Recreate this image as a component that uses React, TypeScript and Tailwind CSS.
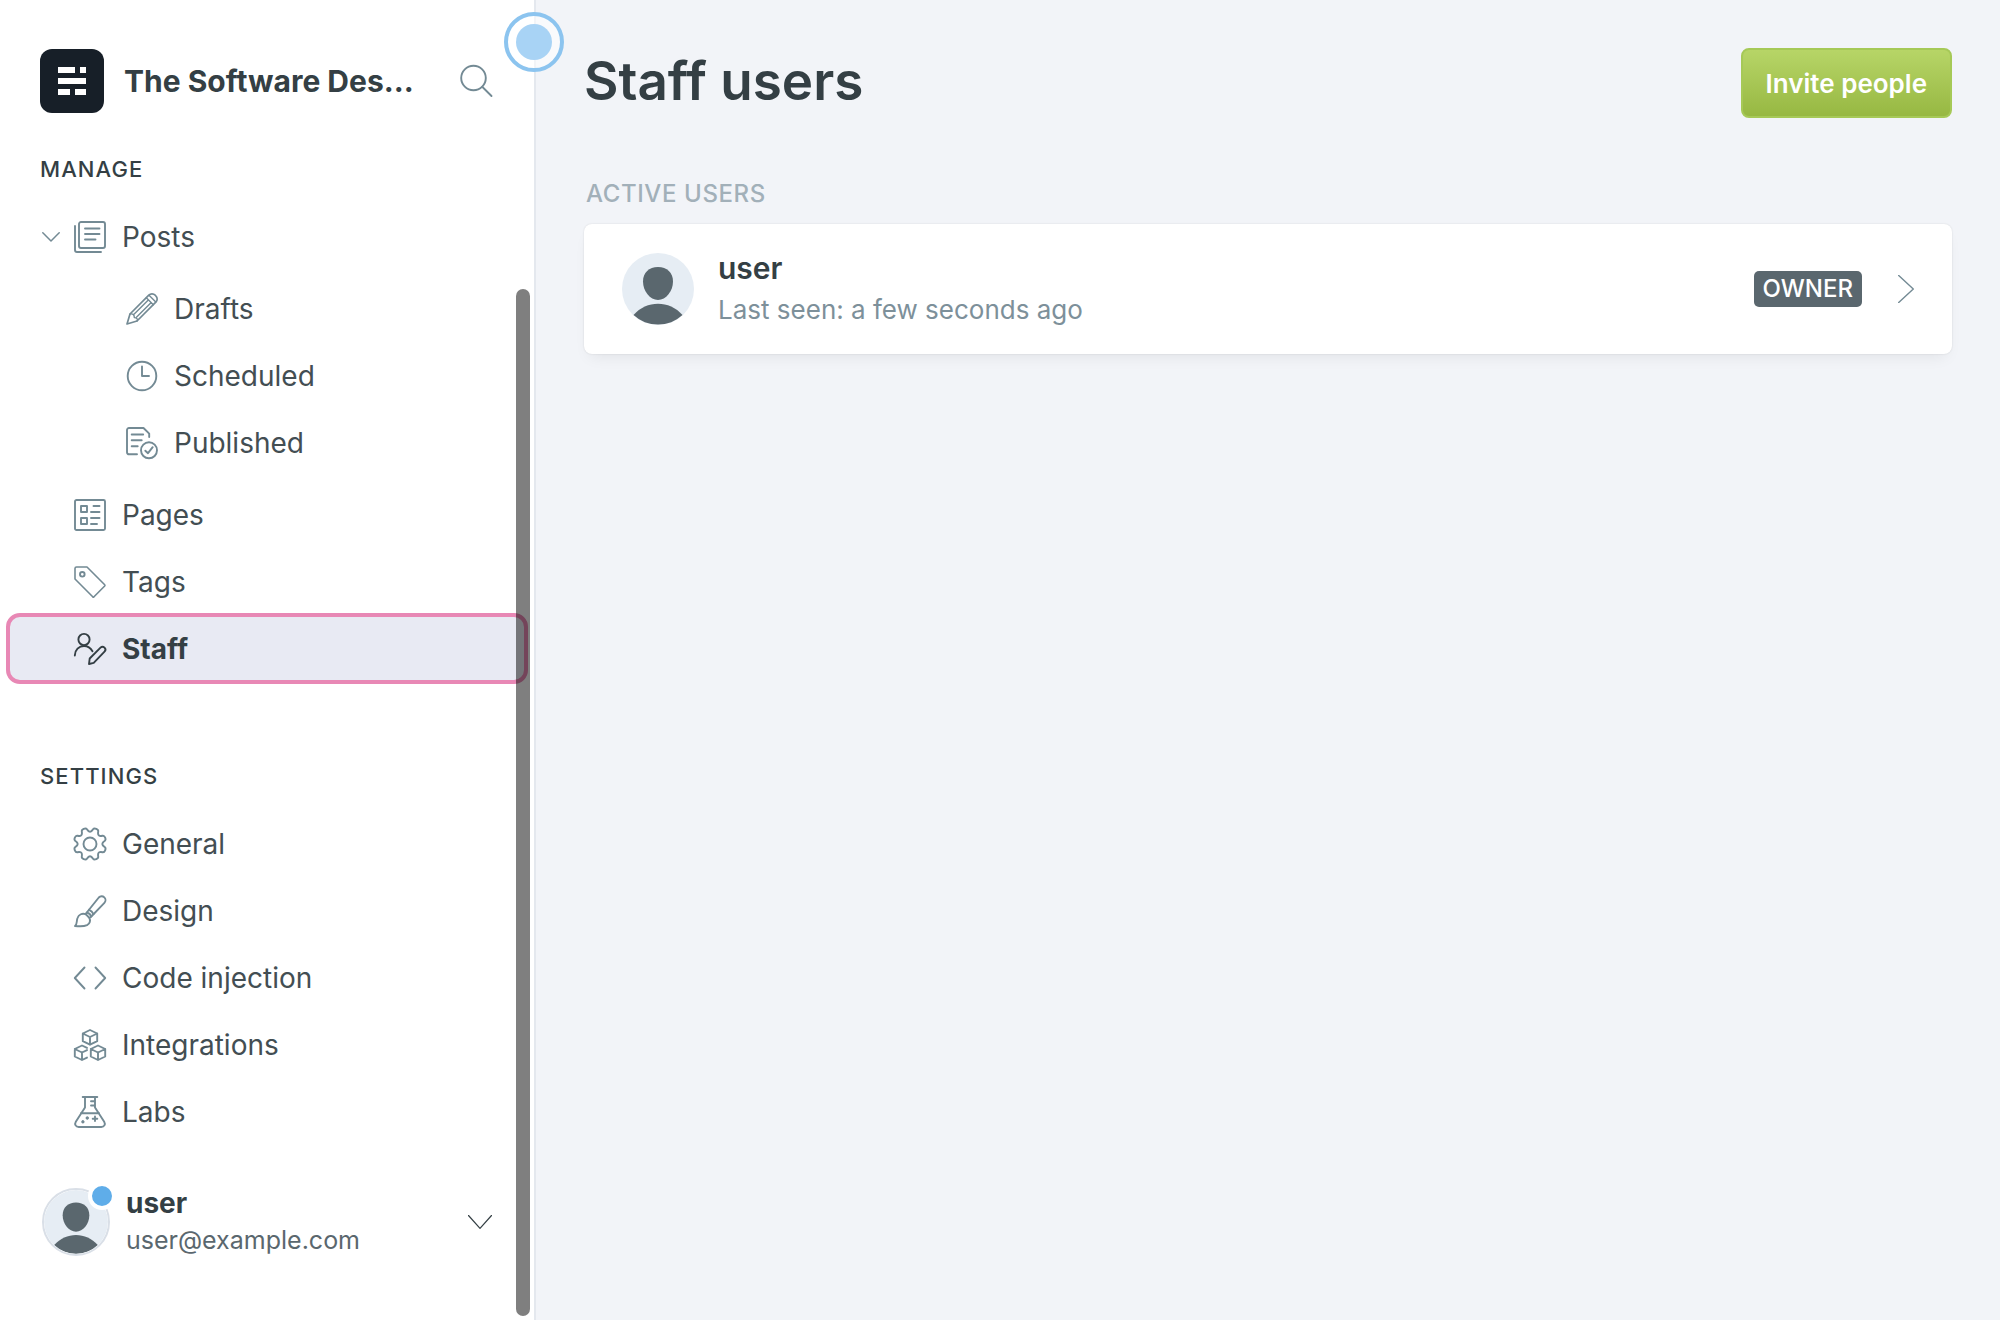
import type { ReactNode } from "react";

function Icon({ children }: { children: ReactNode }) {
  return (
    <svg
      viewBox="0 0 32 32"
      className="size-8 shrink-0 overflow-visible"
      fill="none"
      stroke="currentColor"
      strokeWidth="1.9"
      strokeLinecap="round"
      strokeLinejoin="round"
      aria-hidden="true"
    >
      {children}
    </svg>
  );
}

/* Eight-toothed gear outline, smoothed through the midpoints of its corners. */
function gearPath() {
  const pts: [number, number][] = [];
  for (let k = 0; k < 8; k++) {
    const base = k * 45;
    const ring: [number, number][] = [
      [0, 12],
      [9, 13.4],
      [14, 16.6],
      [31, 16.6],
      [36, 13.4],
    ];
    for (const [deg, r] of ring) {
      const a = ((base + deg) * Math.PI) / 180;
      pts.push([16 + r * Math.sin(a), 16 - r * Math.cos(a)]);
    }
  }
  const mid = (a: [number, number], b: [number, number]) =>
    `${((a[0] + b[0]) / 2).toFixed(2)} ${((a[1] + b[1]) / 2).toFixed(2)}`;
  let d = `M${mid(pts[pts.length - 1], pts[0])}`;
  pts.forEach((p, i) => {
    d += `Q${p[0].toFixed(2)} ${p[1].toFixed(2)} ${mid(p, pts[(i + 1) % pts.length])}`;
  });
  return d + "Z";
}

const icons = {
  posts: (
    <Icon>
      <path d="M1 5v24a2 2 0 0 0 2 2h24" />
      <rect x="5" y="1" width="26" height="26" rx="2" />
      <path d="M11 7.500h14.500M11 13h14.500M11 18.500h10.500" />
    </Icon>
  ),
  drafts: (
    <Icon>
      <path strokeWidth="1.700" d="M1 31l3-10L22.800 2.200a4.400 4.400 0 0 1 6.400 0l.600.600a4.400 4.400 0 0 1 0 6.400L11 28z" />
      <path strokeWidth="1.400" d="M20.300 4.700l7 7M23 2.200l6.800 6.800M4 21c1.500-.2 2.800 0 3.500.8s.8 2 .8 2.800c.9 0 2 .1 2.700 1s.6 1.700 0 2.400M7.500 21.800L22.300 7M10.200 24.500L25 9.700" />
    </Icon>
  ),
  scheduled: (
    <Icon>
      <circle cx="16" cy="16" r="14.300" />
      <path d="M16 6.500V16h7" />
    </Icon>
  ),
  published: (
    <Icon>
      <path d="M11 27.300H3a2 2 0 0 1-2-2V3a2 2 0 0 1 2-2h14.500l5.700 5.700V10" />
      <path d="M5.700 7.500h11.500M5.700 13.300h10M5.700 19.300h6" />
      <circle cx="23" cy="23.300" r="8" />
      <path d="M19.300 23.700l2.700 2.500 4.700-6" />
    </Icon>
  ),
  pages: (
    <Icon>
      <rect x="1" y="1" width="30" height="30" rx="1.500" />
      <rect x="7" y="7" width="6" height="6" />
      <rect x="7" y="19" width="6" height="6" />
      <path d="M19.500 7h6M17 13h8.500M17 19h8.500M17 25h6" />
    </Icon>
  ),
  tags: (
    <Icon>
      <path strokeWidth="1.600" d="M2.500 1H13L30.700 18.700a1 1 0 0 1 0 1.300L20 30.800a1 1 0 0 1-1.300 0L1 13V2.500A1.500 1.500 0 0 1 2.500 1z" />
      <circle cx="8.300" cy="8.300" r="2.300" />
    </Icon>
  ),
  staff: (
    <Icon>
      <circle cx="10" cy="6.500" r="5.600" />
      <path d="M.800 22.500C.800 17 5 13 10 13c3.500 0 6.700 2 8.500 5.200" />
      <path d="M15 31l.7-5.500L26.500 14.700a2.700 2.700 0 0 1 4 4L19.700 29.800z" />
    </Icon>
  ),
  general: (
    <Icon>
      <path d={gearPath()} />
      <circle cx="16" cy="16" r="6.500" />
    </Icon>
  ),
  design: (
    <Icon>
      <path d="M12.800 17.500L24.800 2.500a3.800 3.800 0 0 1 5.600 5.400L17.300 21.500" />
      <path d="M1 31c2.500-1.700 1.200-4.500 2.500-8 1.200-3.500 5-5.200 8-3.800l.7.500 2.800 2.800c2 3 .8 6.200-2 7.700-3.300 1.500-7.500 1.300-12 .800zM11.500 19.200l1.300-1.700c2 .5 3.700 2 4.500 4l-1.800 1.500M15 14.800c1.800.700 3.600 2.300 4.500 4.300" />
    </Icon>
  ),
  code: (
    <Icon>
      <path d="M10.500 5.500L.800 16l9.700 10.500M21.500 5.500L31.200 16 21.500 26.500" />
    </Icon>
  ),
  integrations: (
    <Icon>
      <path d="M16 1l7.200 3.500v7.700L16 15.700l-7.200-3.500V4.500zM8.800 4.500L16 8l7.200-3.500M16 8v7.700" />
      <path d="M24 16.500l7.200 3.500v7.500L24 31l-7.200-3.500V20zM16.800 20L24 23.500l7.200-3.500M24 23.500V31" />
      <path d="M13 18.900L8 16.500.800 20v7.500L8 31l5-2.400M.800 20L8 23.500l5-2.400M8 23.500V31" />
    </Icon>
  ),
  labs: (
    <Icon>
      <path d="M8.700 1h14.600M11 1v10.500L1.800 25.700C.2 28.500 1.800 31 4.700 31h22.600c2.900 0 4.500-2.500 2.900-5.300L21 11.500V1M6.800 17.300h18.400M17 5.300h4M17 9.500h4" />
      <path d="M21 20.500v4.600M18.700 22.800h4.600" />
      <path d="M13.300 21.200l.8.800-.8.800-.8-.8zM8.900 25l.8.800-.8.800-.8-.8z" />
    </Icon>
  ),
};

function Avatar({ className }: { className: string }) {
  return (
    <svg viewBox="0 0 72 72" className={className} aria-hidden="true">
      <circle cx="36" cy="36" r="36" fill="#e6edf4" />
      <g fill="#5a676e">
        <path d="M36 14c9 0 15 5.500 15 14.500C51 38 44 47 36 47s-15-9-15-18.500C21 19.500 27 14 36 14z" />
        <path d="M11.500 62C18 54.500 27 50.700 36 50.700S54 54.500 60.500 62A36 36 0 0 1 11.500 62z" />
      </g>
    </svg>
  );
}

function NavItem({ icon, label, nested = false }: { icon: ReactNode; label: string; nested?: boolean }) {
  return (
    <li>
      <a
        href="#"
        className={`mx-2 flex h-[67px] items-center gap-4 text-[#738a94] ${nested ? "pl-[118px]" : "pl-[66px]"}`}
      >
        {icon}
        <span className="text-[28px] text-[#434e53]">{label}</span>
      </a>
    </li>
  );
}

function SectionTitle({ children }: { children: ReactNode }) {
  return <h2 className="pl-10 text-[22px] leading-8 font-medium tracking-wider text-[#343f44]">{children}</h2>;
}

export default function App() {
  return (
    <div className="flex min-h-screen bg-[#f2f4f8] font-['Inter',sans-serif]">
      <aside className="relative flex w-[536px] shrink-0 flex-col border-r-2 border-[#e4e8ee] bg-white">
        <header className="flex items-center pt-[49px] pr-[42px] pl-10">
          <svg viewBox="0 0 64 64" className="size-16 shrink-0" aria-hidden="true">
            <rect width="64" height="64" rx="12" fill="#171f28" />
            <path d="M18 18h17v6H18zM40 18h6v6h-6zM18 29h28v6H18zM18 40h12v6H18zM35 40h11v6H35z" fill="#fff" />
          </svg>
          <span className="ml-5 flex-1 text-[30px] font-bold whitespace-nowrap text-[#343f44]">The Software Des...</span>
          <button type="button" aria-label="Search" className="text-[#738a94]">
            <Icon>
              <circle cx="13.500" cy="13" r="12.300" />
              <path d="M22.200 21.800L31.500 31" />
            </Icon>
          </button>
        </header>

        <nav>
          <div className="mt-10">
            <SectionTitle>MANAGE</SectionTitle>
            <ul className="mt-[18px]">
              <li>
                <div className="mx-2 flex h-[67px] items-center pl-[34px] text-[#738a94]">
                  <button type="button" aria-label="Collapse posts" className="mr-[14px]">
                    <svg viewBox="0 0 18 10" className="h-[10px] w-[18px]" fill="none" stroke="currentColor" strokeWidth="1.500" strokeLinecap="round" strokeLinejoin="round">
                      <path d="M.800.800L9 9 17.200.800" />
                    </svg>
                  </button>
                  <a href="#" className="flex flex-1 items-center gap-4">
                    {icons.posts}
                    <span className="text-[28px] text-[#434e53]">Posts</span>
                  </a>
                </div>
                <ul className="my-[5px]">
                  <NavItem nested icon={icons.drafts} label="Drafts" />
                  <NavItem nested icon={icons.scheduled} label="Scheduled" />
                  <NavItem nested icon={icons.published} label="Published" />
                </ul>
              </li>
              <NavItem icon={icons.pages} label="Pages" />
              <NavItem icon={icons.tags} label="Tags" />
              <li>
                <a
                  href="#"
                  aria-current="page"
                  className="mx-2 flex h-[67px] items-center gap-4 rounded-xl bg-[#e8eaf3] pl-[66px] text-[#343f44] outline-4 -outline-offset-2 outline-[#e888b5]"
                >
                  {icons.staff}
                  <span className="text-[28px] font-bold">Staff</span>
                </a>
              </li>
            </ul>
          </div>

          <div className="mt-[78px]">
            <SectionTitle>SETTINGS</SectionTitle>
            <ul className="mt-[18px]">
              <NavItem icon={icons.general} label="General" />
              <NavItem icon={icons.design} label="Design" />
              <NavItem icon={icons.code} label="Code injection" />
              <NavItem icon={icons.integrations} label="Integrations" />
              <NavItem icon={icons.labs} label="Labs" />
            </ul>
          </div>
        </nav>

        <button type="button" className="mt-auto mb-[61px] flex items-center pr-[42px] pl-[42px] text-left">
          <span className="relative">
            <Avatar className="size-[68px] rounded-full border-2 border-[#d9dfe7]" />
            <span className="absolute -top-[6px] -right-[6px] size-7 rounded-full border-4 border-white bg-[#5fade9]" />
          </span>
          <span className="ml-4 flex-1">
            <span className="block text-[28px] leading-[37px] font-bold text-[#343f44]">user</span>
            <span className="block text-[25px] leading-[37px] text-[#5a676e]">user@example.com</span>
          </span>
          <svg viewBox="0 0 24 14" className="h-[14px] w-6" fill="none" stroke="#343f44" strokeWidth="1.200" strokeLinecap="round" strokeLinejoin="round" aria-hidden="true">
            <path d="M.500.500L12 13.300 23.500.500" />
          </svg>
        </button>

        <div className="absolute top-[289px] right-1 bottom-1 w-[14px] rounded-full bg-black/50" />
        <div className="absolute top-3 -right-[30px] z-10 flex size-[60px] items-center justify-center rounded-full border-4 border-[#8cc4ef] bg-white/50">
          <span className="size-9 rounded-full bg-[#a8d3f5]" />
        </div>
      </aside>

      <main className="min-w-0 flex-1 px-12 pt-12">
        <header className="flex items-start justify-between">
          <h1 className="text-[53px] leading-[66px] font-semibold text-[#343f44]">Staff users</h1>
          <button
            type="button"
            className="h-[70px] rounded-lg border-2 border-[#a6c957] bg-linear-to-b from-[#b7d567] to-[#97b842] px-[23px] text-[26px] font-semibold text-white"
          >
            Invite people
          </button>
        </header>

        <section>
          <h2 className="mt-[60px] pl-[2px] text-[24px] leading-8 font-medium tracking-wide text-[#a2b0b9]">ACTIVE USERS</h2>
          <a
            href="#"
            className="mt-[14px] flex h-[130px] items-center rounded-lg bg-white px-[38px] shadow-[0_0_2px_rgba(0,0,0,0.12),0_8px_16px_-6px_rgba(0,0,0,0.08)]"
          >
            <Avatar className="size-[72px] shrink-0" />
            <span className="ml-6 flex-1">
              <span className="block text-[30px] leading-[42px] font-semibold text-[#343f44]">user</span>
              <span className="block text-[26px] leading-[42px] text-[#7d909a]">Last seen: a few seconds ago</span>
            </span>
            <span className="mr-9 rounded-[5px] bg-[#5a676e] px-[9px] text-[24px] leading-9 font-medium text-white">OWNER</span>
            <svg viewBox="0 0 16 28" className="h-7 w-4" fill="none" stroke="#738a94" strokeWidth="1.400" strokeLinecap="round" strokeLinejoin="round" aria-hidden="true">
              <path d="M.700.500L15.300 14 .700 27.500" />
            </svg>
          </a>
        </section>
      </main>
    </div>
  );
}
